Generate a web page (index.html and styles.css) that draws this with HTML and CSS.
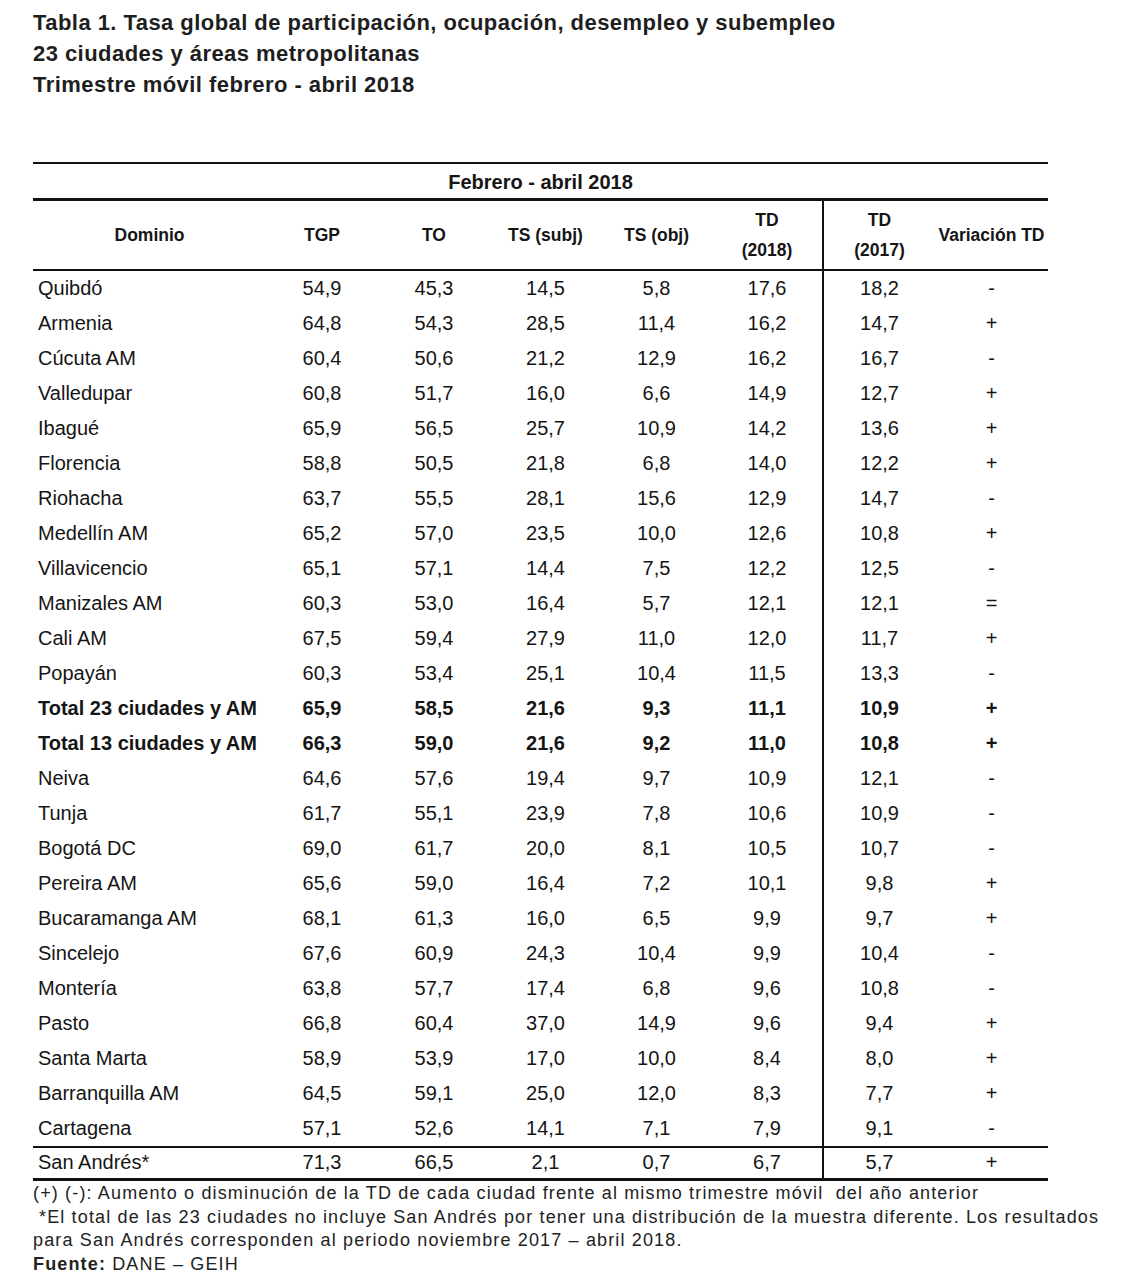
FILE: index.html
```html
<!DOCTYPE html>
<html lang="es">
<head>
<meta charset="utf-8">
<title>Tabla 1</title>
<link rel="stylesheet" href="styles.css">
</head>
<body>
<div class="page">
  <div class="title">
    <div>Tabla 1. Tasa global de participación, ocupación, desempleo y subempleo</div>
    <div>23 ciudades y áreas metropolitanas</div>
    <div>Trimestre móvil febrero - abril 2018</div>
  </div>

  <table class="t">
    <colgroup>
      <col class="c-dom"><col class="c-a"><col class="c-a"><col class="c-b"><col class="c-b"><col class="c-b"><col class="c-a"><col class="c-c">
    </colgroup>
    <thead>
      <tr class="period"><th colspan="8">Febrero - abril 2018</th></tr>
      <tr class="heads">
        <th>Dominio</th><th>TGP</th><th>TO</th><th>TS (subj)</th><th>TS (obj)</th><th>TD<br>(2018)</th><th class="sep">TD<br>(2017)</th><th>Variación TD</th>
      </tr>
    </thead>
    <tbody>
      <tr><td>Quibdó</td><td>54,9</td><td>45,3</td><td>14,5</td><td>5,8</td><td>17,6</td><td class="sep">18,2</td><td>-</td></tr>
      <tr><td>Armenia</td><td>64,8</td><td>54,3</td><td>28,5</td><td>11,4</td><td>16,2</td><td class="sep">14,7</td><td>+</td></tr>
      <tr><td>Cúcuta AM</td><td>60,4</td><td>50,6</td><td>21,2</td><td>12,9</td><td>16,2</td><td class="sep">16,7</td><td>-</td></tr>
      <tr><td>Valledupar</td><td>60,8</td><td>51,7</td><td>16,0</td><td>6,6</td><td>14,9</td><td class="sep">12,7</td><td>+</td></tr>
      <tr><td>Ibagué</td><td>65,9</td><td>56,5</td><td>25,7</td><td>10,9</td><td>14,2</td><td class="sep">13,6</td><td>+</td></tr>
      <tr><td>Florencia</td><td>58,8</td><td>50,5</td><td>21,8</td><td>6,8</td><td>14,0</td><td class="sep">12,2</td><td>+</td></tr>
      <tr><td>Riohacha</td><td>63,7</td><td>55,5</td><td>28,1</td><td>15,6</td><td>12,9</td><td class="sep">14,7</td><td>-</td></tr>
      <tr><td>Medellín AM</td><td>65,2</td><td>57,0</td><td>23,5</td><td>10,0</td><td>12,6</td><td class="sep">10,8</td><td>+</td></tr>
      <tr><td>Villavicencio</td><td>65,1</td><td>57,1</td><td>14,4</td><td>7,5</td><td>12,2</td><td class="sep">12,5</td><td>-</td></tr>
      <tr><td>Manizales AM</td><td>60,3</td><td>53,0</td><td>16,4</td><td>5,7</td><td>12,1</td><td class="sep">12,1</td><td>=</td></tr>
      <tr><td>Cali AM</td><td>67,5</td><td>59,4</td><td>27,9</td><td>11,0</td><td>12,0</td><td class="sep">11,7</td><td>+</td></tr>
      <tr><td>Popayán</td><td>60,3</td><td>53,4</td><td>25,1</td><td>10,4</td><td>11,5</td><td class="sep">13,3</td><td>-</td></tr>
      <tr class="bold"><td>Total 23 ciudades y AM</td><td>65,9</td><td>58,5</td><td>21,6</td><td>9,3</td><td>11,1</td><td class="sep">10,9</td><td>+</td></tr>
      <tr class="bold"><td>Total 13 ciudades y AM</td><td>66,3</td><td>59,0</td><td>21,6</td><td>9,2</td><td>11,0</td><td class="sep">10,8</td><td>+</td></tr>
      <tr><td>Neiva</td><td>64,6</td><td>57,6</td><td>19,4</td><td>9,7</td><td>10,9</td><td class="sep">12,1</td><td>-</td></tr>
      <tr><td>Tunja</td><td>61,7</td><td>55,1</td><td>23,9</td><td>7,8</td><td>10,6</td><td class="sep">10,9</td><td>-</td></tr>
      <tr><td>Bogotá DC</td><td>69,0</td><td>61,7</td><td>20,0</td><td>8,1</td><td>10,5</td><td class="sep">10,7</td><td>-</td></tr>
      <tr><td>Pereira AM</td><td>65,6</td><td>59,0</td><td>16,4</td><td>7,2</td><td>10,1</td><td class="sep">9,8</td><td>+</td></tr>
      <tr><td>Bucaramanga AM</td><td>68,1</td><td>61,3</td><td>16,0</td><td>6,5</td><td>9,9</td><td class="sep">9,7</td><td>+</td></tr>
      <tr><td>Sincelejo</td><td>67,6</td><td>60,9</td><td>24,3</td><td>10,4</td><td>9,9</td><td class="sep">10,4</td><td>-</td></tr>
      <tr><td>Montería</td><td>63,8</td><td>57,7</td><td>17,4</td><td>6,8</td><td>9,6</td><td class="sep">10,8</td><td>-</td></tr>
      <tr><td>Pasto</td><td>66,8</td><td>60,4</td><td>37,0</td><td>14,9</td><td>9,6</td><td class="sep">9,4</td><td>+</td></tr>
      <tr><td>Santa Marta</td><td>58,9</td><td>53,9</td><td>17,0</td><td>10,0</td><td>8,4</td><td class="sep">8,0</td><td>+</td></tr>
      <tr><td>Barranquilla AM</td><td>64,5</td><td>59,1</td><td>25,0</td><td>12,0</td><td>8,3</td><td class="sep">7,7</td><td>+</td></tr>
      <tr class="pre-last"><td>Cartagena</td><td>57,1</td><td>52,6</td><td>14,1</td><td>7,1</td><td>7,9</td><td class="sep">9,1</td><td>-</td></tr>
      <tr class="last"><td>San Andrés*</td><td>71,3</td><td>66,5</td><td>2,1</td><td>0,7</td><td>6,7</td><td class="sep">5,7</td><td>+</td></tr>
    </tbody>
  </table>

  <div class="notes">
    <div>(+) (-): Aumento o disminución de la TD de cada ciudad frente al mismo trimestre móvil &nbsp;del año anterior</div>
    <div class="indent">*El total de las 23 ciudades no incluye San Andrés por tener una distribución de la muestra diferente. Los resultados</div>
    <div>para San Andrés corresponden al periodo noviembre 2017 – abril 2018.</div>
    <div><b>Fuente:</b> DANE – GEIH</div>
  </div>
</div>
</body>
</html>
```

FILE: styles.css
```css
html, body {
  margin: 0;
  padding: 0;
  background: #ffffff;
}

body {
  font-family: "Liberation Sans", Arial, sans-serif;
  color: #151515;
}

.page {
  padding: 7px 0 0 33px;
}

.title {
  font-weight: bold;
  font-size: 22px;
  letter-spacing: 0.45px;
  line-height: 31px;
  color: #1e1e1e;
  white-space: nowrap;
}

.t {
  margin-top: 62px;
  border-collapse: collapse;
  table-layout: fixed;
  width: 1015px;
  border-top: 2px solid #111;
}

.c-dom { width: 233px; }
.c-a { width: 112px; }
.c-b { width: 111px; }
.c-c { width: 113px; }

.t th,
.t td {
  padding: 0;
  text-align: center;
  vertical-align: middle;
}

.period th {
  height: 32px;
  font-size: 20px;
  font-weight: bold;
  border-bottom: 3px solid #111;
  padding-top: 2px;
}

.heads th {
  height: 68px;
  font-size: 17.5px;
  font-weight: bold;
  line-height: 30px;
  border-bottom: 2px solid #111;
}

.t td {
  height: 33px;
  padding-bottom: 2px;
  font-size: 20px;
  line-height: 20px;
}

.t td:first-child {
  text-align: left;
  padding-left: 5px;
}

.bold td {
  font-weight: bold;
}

.t .sep {
  border-left: 2px solid #111;
}

.pre-last td {
  border-bottom: 2px solid #111;
}

.last td {
  height: 27px;
  padding-bottom: 3px;
  border-bottom: 3px solid #111;
}

.notes {
  margin-top: 1px;
  font-size: 18px;
  letter-spacing: 1.15px;
  line-height: 23.5px;
  color: #222;
  white-space: nowrap;
}

.notes .indent {
  padding-left: 6px;
}
```
